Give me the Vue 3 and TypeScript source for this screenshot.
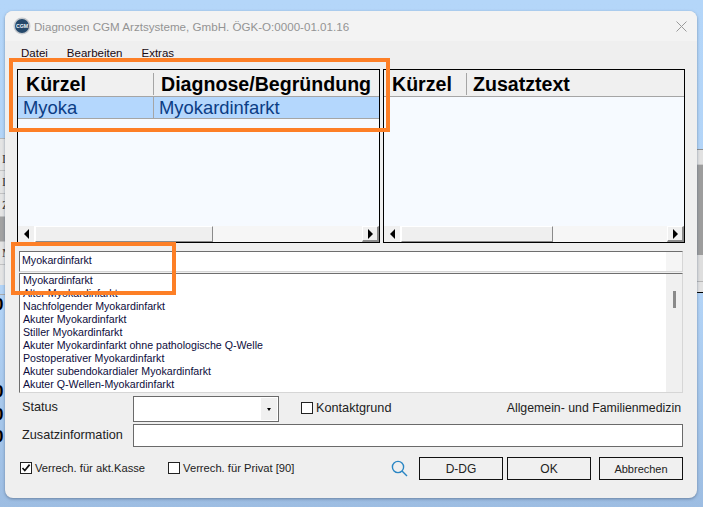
<script setup lang="ts">
const menus: string[] = ['Datei', 'Bearbeiten', 'Extras']
const suggestions: string[] = [
  'Myokardinfarkt',
  'Alter Myokardinfarkt',
  'Nachfolgender Myokardinfarkt',
  'Akuter Myokardinfarkt',
  'Stiller Myokardinfarkt',
  'Akuter Myokardinfarkt ohne pathologische Q-Welle',
  'Postoperativer Myokardinfarkt',
  'Akuter subendokardialer Myokardinfarkt',
  'Akuter Q-Wellen-Myokardinfarkt',
]
</script>

<template>
  <div class="desktop">
    <div class="behind-left">
      <div class="bl-row">I</div>
      <div class="bl-row">I</div>
      <div class="bl-row">Z</div>
      <div class="bl-row dark"></div>
      <div class="bl-row">M</div>
      <div class="bl-row tall"></div>
    </div>
    <div class="behind-right">
      <div class="br-top"></div>
      <div class="br-dark"></div>
      <div class="br-light"></div>
    </div>
    <span class="clip c1">0</span>
    <span class="clip c2">0</span>
    <span class="clip c3">0</span>
    <span class="clip c4">0</span>

    <section class="dialog">
      <header class="titlebar">
        <svg class="logo" width="18" height="18" viewBox="0 0 18 18">
          <circle cx="9" cy="9" r="8.5" fill="#c4c8cd" />
          <circle cx="9" cy="9" r="7" fill="#24486b" />
          <text x="9" y="10.8" text-anchor="middle" font-size="5.2" font-weight="700" font-family="Liberation Sans" fill="#f2f6fa">CGM</text>
        </svg>
        <span class="title">Diagnosen CGM Arztsysteme, GmbH. ÖGK-O:0000-01.01.16</span>
        <svg class="close" width="11" height="11" viewBox="0 0 11 11">
          <path d="M.5.5l10 10M10.5.5l-10 10" stroke="#9a9a9a" stroke-width="1" fill="none" />
        </svg>
      </header>

      <div class="body">
        <nav class="menu">
          <span v-for="m in menus" :key="m" class="menu-item">{{ m }}</span>
        </nav>

        <div class="panels">
          <div class="panel left">
            <div class="grid-head">
              <span class="cell c-left-1">Kürzel</span>
              <span class="cell c-left-2">Diagnose/Begründung</span>
            </div>
            <div class="grid-row">
              <span class="cell c-left-1 row-a">Myoka</span>
              <span class="cell c-left-2 row-b">Myokardinfarkt</span>
            </div>
            <div class="grid-space"></div>
            <div class="hscroll">
              <span class="sbtn"><i class="tri-l"></i></span>
              <span class="thumb t-left"></span>
              <span class="track"></span>
              <span class="sbtn raised"><i class="tri-r"></i></span>
            </div>
          </div>
          <div class="panel right">
            <div class="grid-head">
              <span class="cell c-right-1">Kürzel</span>
              <span class="cell c-right-2">Zusatztext</span>
            </div>
            <div class="grid-space"></div>
            <div class="hscroll">
              <span class="sbtn"><i class="tri-l"></i></span>
              <span class="thumb t-right"></span>
              <span class="track"></span>
              <span class="sbtn raised"><i class="tri-r"></i></span>
            </div>
          </div>
        </div>

        <div class="search-box">
          <span class="search-value">Myokardinfarkt</span>
          <span class="search-end"></span>
        </div>

        <div class="listbox">
          <ul class="items">
            <li v-for="s in suggestions" :key="s">{{ s }}</li>
          </ul>
          <div class="vscroll"><span class="vthumb"></span></div>
        </div>

        <div class="status-row">
          <span class="label">Status</span>
          <div class="select">
            <span class="select-btn"><i class="tri-d"></i></span>
          </div>
          <label class="check kontakt"><i class="box"></i><span>Kontaktgrund</span></label>
          <span class="spec">Allgemein- und Familienmedizin</span>
        </div>

        <div class="info-row">
          <span class="label">Zusatzinformation</span>
          <div class="info-input"></div>
        </div>

        <div class="foot">
          <label class="check small-check">
            <i class="box">
              <svg width="10" height="10" viewBox="0 0 10 10"><path d="M1.5 5l2.3 2.5L8.6 1.6" fill="none" stroke="#111" stroke-width="1.7" /></svg>
            </i>
            <span>Verrech. für akt.Kasse</span>
          </label>
          <label class="check small-check second"><i class="box"></i><span>Verrech. für Privat [90]</span></label>
          <svg class="lens" width="17" height="17" viewBox="0 0 17 17">
            <circle cx="7" cy="7" r="5.6" fill="none" stroke="#2a86c4" stroke-width="1.4" />
            <path d="M11 11l5 5" stroke="#2a86c4" stroke-width="1.4" />
          </svg>
          <button class="btn">D-DG</button>
          <button class="btn">OK</button>
          <button class="btn last">Abbrechen</button>
        </div>
      </div>
    </section>

    <div class="mark mark-a"></div>
    <div class="mark mark-b"></div>
  </div>
</template>

<style>
html, body { margin: 0; padding: 0; }
</style>

<style scoped>
.desktop {
  position: relative;
  width: 703px;
  height: 507px;
  overflow: hidden;
  background: linear-gradient(#b4d6f9 0, #b2d3f6 300px, #9dbde2 507px);
  font-family: "Liberation Sans", Arial, sans-serif;
}
.behind-left {
  position: absolute;
  left: 0;
  top: 138px;
  width: 6px;
  height: 147px;
  background: #e4e4e4;
  border-top: 1px solid #b5b5b5;
  padding-top: 9px;
  box-sizing: border-box;
}
.bl-row {
  height: 23px;
  border-bottom: 1px solid #c2c2c2;
  font: 12px/23px "Liberation Serif", serif;
  padding-left: 2px;
  color: #333;
  box-sizing: border-box;
}
.bl-row.dark { height: 25px; background: #a2a2a2; }
.bl-row.tall { height: 30px; border-bottom: 1px solid #aaa; }
.behind-right {
  position: absolute;
  right: 0;
  top: 149px;
  width: 6px;
  height: 144px;
  background: #e2e2e2;
  border-top: 1px solid #8f8f8f;
  border-bottom: 1px solid #000;
  box-sizing: border-box;
}
.br-top { height: 14px; border-bottom: 1px solid #c9c9c9; }
.br-dark { height: 90px; background: #9d9d9d; }
.br-light { height: 26px; border-bottom: 1px solid #b5b5b5; background: #dedede; }
.clip {
  position: absolute;
  left: -6px;
  font: bold 17px/18px "Liberation Sans", sans-serif;
  color: #000;
}
.c1 { top: 296px; }
.c2 { top: 383px; }
.c3 { top: 406px; }
.c4 { top: 428px; }

.dialog {
  position: absolute;
  left: 5px;
  top: 11px;
  width: 692px;
  height: 487px;
  box-sizing: border-box;
  background: #efefef;
  border-radius: 8px;
  box-shadow: 0 1px 3px rgba(60, 80, 110, .55);
  overflow: hidden;
  display: flex;
  flex-direction: column;
}
.titlebar {
  height: 30px;
  flex: none;
  background: #f3f3f3;
  display: flex;
  align-items: center;
  padding: 0 10px 0 8px;
  box-sizing: border-box;
}
.logo { flex: none; }
.title {
  margin-left: 3px;
  font-size: 11.6px;
  color: #949494;
  flex: 1;
}
.close { flex: none; }
.body {
  flex: 1;
  display: flex;
  flex-direction: column;
  padding: 0 12px;
  min-height: 0;
}
.menu {
  display: flex;
  height: 28px;
  padding: 6px 0 0 4px;
  box-sizing: border-box;
  flex: none;
}
.menu-item {
  font-size: 11.5px;
  line-height: 12px;
  color: #1a0a12;
  margin-right: 19px;
}
.panels {
  display: flex;
  gap: 3px;
  height: 174px;
  flex: none;
}
.panel {
  box-sizing: border-box;
  border: 1px solid #000;
  background: #f6faff;
  display: flex;
  flex-direction: column;
}
.panel.left { width: 363px; }
.panel.right { width: 302px; }
.grid-head {
  height: 27px;
  flex: none;
  display: flex;
  background: #f0f0f0;
  border-bottom: 1px solid #a5a5a5;
  box-sizing: border-box;
  font-weight: 700;
  font-size: 19.6px;
  color: #000;
}
.cell {
  display: flex;
  align-items: center;
  box-sizing: border-box;
  white-space: nowrap;
}
.grid-head .cell { height: 22px; margin-top: 3px; }
.c-left-1 { width: 136px; padding-left: 8px; border-right: 1px solid #a5a5a5; }
.c-left-2 { flex: 1; padding-left: 7px; }
.c-right-1 { width: 83px; padding-left: 8px; border-right: 1px solid #a5a5a5; }
.c-right-2 { flex: 1; padding-left: 6px; }
.grid-row {
  height: 22px;
  flex: none;
  display: flex;
  background: #b4d7fd;
  border-bottom: 1px solid #a5a5a5;
  box-sizing: border-box;
  font-size: 18.4px;
  color: #0b3d85;
  overflow: hidden;
}
.grid-row .cell { height: 21px; }
.row-a { padding-left: 5px; border-right: 1px solid #a5a5a5; }
.row-b { padding-left: 5px; }
.grid-space { flex: 1; }
.hscroll {
  height: 16px;
  flex: none;
  display: flex;
  background: #f0f0f0;
}
.sbtn {
  width: 17px;
  flex: none;
  box-sizing: border-box;
  display: flex;
  align-items: center;
  justify-content: center;
  background: #f0f0f0;
  border-right: 1px solid #fff;
}
.sbtn.raised {
  border-right: 2px solid #8a8a8a;
  border-bottom: 2px solid #8a8a8a;
  border-top: 1px solid #fff;
  border-left: 1px solid #fff;
}
.thumb {
  flex: none;
  box-sizing: border-box;
  background: #efefef;
  border-right: 1px solid #8a8a8a;
  border-bottom: 1px solid #8a8a8a;
  border-left: 1px solid #fff;
  border-top: 1px solid #fff;
}
.t-left { width: 178px; }
.t-right { width: 152px; }
.track {
  flex: 1;
  background-color: #f6f6f6;
  background-image: radial-gradient(#e2e2e2 .5px, transparent .6px);
  background-size: 2px 2px;
}
.tri-l, .tri-r, .tri-d { display: block; width: 0; height: 0; }
.tri-l { border: 5px solid transparent; border-left: 0; border-right: 5px solid #000; }
.tri-r { border: 5px solid transparent; border-right: 0; border-left: 5px solid #000; }
.tri-d { border: 2.5px solid transparent; border-bottom: 0; border-top: 3px solid #000; }

.search-box {
  margin: 8px 0 0 2px;
  width: 664px;
  height: 21px;
  flex: none;
  box-sizing: border-box;
  display: flex;
  background: #fff;
  border-top: 1px solid #6e6e6e;
  border-left: 1px solid #6e6e6e;
  border-right: 1px solid #d6d6d6;
  border-bottom: 1px solid #d6d6d6;
}
.search-value {
  flex: 1;
  font-size: 10.65px;
  line-height: 16px;
  color: #0c0c3c;
  padding-left: 2px;
}
.search-end { width: 16px; background: #f5f5f5; }
.listbox {
  margin: 1px 0 0 2px;
  width: 664px;
  height: 120px;
  flex: none;
  box-sizing: border-box;
  display: flex;
  background: #fff;
  border-top: 1px solid #6e6e6e;
  border-left: 1px solid #6e6e6e;
  border-right: 1px solid #d6d6d6;
  border-bottom: 1px solid #d6d6d6;
}
.items {
  flex: 1;
  list-style: none;
  margin: 0;
  padding: 0 0 0 3px;
  font-size: 10.65px;
  line-height: 13px;
  color: #0c0c3c;
}
.items li { white-space: nowrap; height: 13px; }
.vscroll {
  width: 16px;
  flex: none;
  background: #f0f0f0;
  box-sizing: border-box;
  padding: 17px 0 0 7px;
}
.vthumb { display: block; width: 3px; height: 17px; background: #8a8a8a; }

.status-row {
  display: flex;
  align-items: center;
  height: 26px;
  margin: 3px 2px 0 0;
  flex: none;
}
.label {
  width: 116px;
  padding: 0 0 2px 5px;
  box-sizing: border-box;
  font-size: 12.7px;
  color: #222;
  flex: none;
}
.status-row .label { padding-bottom: 4px; }
.select {
  width: 146px;
  height: 26px;
  flex: none;
  box-sizing: border-box;
  background: #fff;
  border: 1px solid #6a6a6a;
  display: flex;
  justify-content: flex-end;
  padding: 1px 1px 1px 0;
}
.select-btn {
  width: 16px;
  background: #f0f0f0;
  display: flex;
  align-items: center;
  justify-content: center;
}
.check {
  display: flex;
  align-items: center;
  color: #222;
}
.box {
  display: block;
  width: 10px;
  height: 10px;
  border: 1px solid #222;
  background: #fff;
  flex: none;
}
.box svg { display: block; }
.kontakt { margin-left: 22px; gap: 3px; font-size: 12.7px; padding-bottom: 3px; }
.spec {
  margin-left: auto;
  margin-right: 2px;
  padding-bottom: 3px;
  font-size: 12.3px;
  color: #222;
}
.info-row {
  display: flex;
  align-items: center;
  height: 23px;
  margin: 2px 2px 0 0;
  flex: none;
}
.info-input {
  flex: 1;
  height: 23px;
  box-sizing: border-box;
  background: #fff;
  border: 1px solid #6a6a6a;
}
.foot {
  display: flex;
  align-items: center;
  height: 23px;
  margin: 10px 2px 0 0;
  padding-left: 3px;
  flex: none;
}
.small-check { gap: 3px; font-size: 11.2px; padding-bottom: 1px; }
.second { margin-left: 23px; }
.lens { margin-left: auto; margin-right: 11px; flex: none; }
.btn {
  width: 84px;
  height: 23px;
  box-sizing: border-box;
  border: 1px solid #111;
  background: #f0f0f0;
  font: 12px "Liberation Sans", Arial, sans-serif;
  color: #222;
  margin-right: 4px;
  padding: 0;
}
.btn.last { margin-right: 0; margin-left: 4px; font-size: 11px; }

.mark {
  position: absolute;
  box-sizing: border-box;
  border: 4px solid #fd7f26;
  pointer-events: none;
}
.mark-a { left: 9px; top: 58px; width: 381px; height: 74px; }
.mark-b { left: 11px; top: 242px; width: 165px; height: 53px; }
</style>
